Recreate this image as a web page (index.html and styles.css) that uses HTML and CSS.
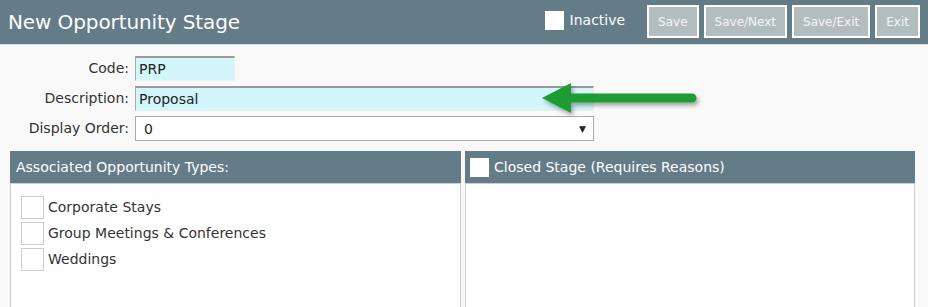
FILE: index.html
```html
<!DOCTYPE html>
<html lang="en">
<head>
  <meta charset="UTF-8" />
  <title>New Opportunity Stage</title>
  <link rel="stylesheet" href="styles.css">
</head>
<body>

<header class="topbar">
  <h1>New Opportunity Stage</h1>
  <div class="actions">
    <label class="inactive"><span class="box"></span>Inactive</label>
    <button class="btn">Save</button>
    <button class="btn">Save/Next</button>
    <button class="btn">Save/Exit</button>
    <button class="btn">Exit</button>
  </div>
</header>

<!-- Stage fields -->
<section class="form">
  <label class="lbl">Code:</label>
  <div class="field code">PRP</div>
  <label class="lbl">Description:</label>
  <div class="field desc">Proposal</div>
  <label class="lbl">Display Order:</label>
  <div class="select"><span>0</span><span class="caret">&#9660;</span></div>

  <svg class="arrow" width="170" height="40" viewBox="0 0 170 40">
    <defs>
      <filter id="shadow" x="-10%" y="-30%" width="130%" height="180%">
        <feDropShadow dx="2" dy="3" stdDeviation="2" flood-color="#000" flood-opacity="0.35"/>
      </filter>
    </defs>
    <g filter="url(#shadow)">
      <line x1="30" y1="17" x2="153" y2="17" stroke="#1b9c31" stroke-width="9" stroke-linecap="round"/>
      <polygon points="3,17 32,2 32,32" fill="#1b9c31"/>
    </g>
  </svg>
</section>

<!-- Panels -->
<section class="panels">
  <div class="panel">
    <div class="panel-head">Associated Opportunity Types:</div>
    <div class="panel-body">
      <label class="item"><span class="check"></span>Corporate Stays</label>
      <label class="item"><span class="check"></span>Group Meetings &amp; Conferences</label>
      <label class="item"><span class="check"></span>Weddings</label>
    </div>
  </div>
  <div class="panel">
    <div class="panel-head"><span class="box"></span>Closed Stage (Requires Reasons)</div>
    <div class="panel-body"></div>
  </div>
</section>

</body>
</html>
```

FILE: styles.css
```css
* {
  box-sizing: border-box;
}
body {
  margin: 0;
  font-family: "DejaVu Sans", Verdana, sans-serif;
  font-size: 14px;
  background: #f9f9f9;
  color: #333;
  overflow: hidden;
}
.topbar {
  height: 45px;
  background: #647b88;
  border-bottom: 1px solid #d4dbdf;
  display: flex;
  align-items: center;
  justify-content: space-between;
  padding: 0 8px 0 8px;
}
.topbar h1 {
  margin: 0;
  font-weight: normal;
  font-size: 20px;
  color: #fff;
  letter-spacing: -0.1px;
}
.actions {
  display: flex;
  align-items: center;
  gap: 5px;
}
.inactive {
  display: flex;
  align-items: center;
  color: #fff;
  font-size: 14px;
  margin-right: 17px;
  padding-bottom: 4px;
}
.box {
  display: inline-block;
  width: 19px;
  height: 19px;
  background: #fff;
  margin-right: 6px;
}
.btn {
  height: 33px;
  padding: 0 9px;
  margin: 0 0 1px 0;
  background: #b2bebd;
  border: 2px solid #fff;
  color: #f6f6f6;
  font-family: inherit;
  font-size: 12px;
}
.form {
  position: relative;
  display: grid;
  grid-template-columns: 129px auto;
  column-gap: 6px;
  row-gap: 5px;
  padding: 11px 0 0 0;
  width: 600px;
}
.lbl {
  text-align: right;
  line-height: 25px;
}
.field {
  height: 25px;
  line-height: 22px;
  padding: 0 3px;
  background: #d2f6f9;
  border-top: 2px solid #999;
  border-left: 1px solid #aaa;
  border-right: 1px solid #eee;
  border-bottom: 1px solid #eee;
  color: #222;
}
.code {
  width: 100px;
}
.desc {
  width: 459px;
}
.select {
  width: 459px;
  height: 25px;
  background: #fff;
  border: 1px solid #aaa;
  display: flex;
  justify-content: space-between;
  align-items: center;
  padding: 0 7px 0 8px;
  color: #222;
}
.caret {
  font-size: 9px;
}
.arrow {
  position: absolute;
  left: 539px;
  top: 36px;
}
.panels {
  display: grid;
  grid-template-columns: 451px 450px;
  gap: 4px;
  padding: 10px 0 0 10px;
}
.panel-head {
  height: 33px;
  background: #647b88;
  color: #fff;
  display: flex;
  align-items: center;
  padding: 0 6px;
  border-bottom: 1px solid #c9d1d5;
}
.panel-head .box {
  margin-left: -1px;
  margin-right: 5px;
}
.panel-body {
  background: #fff;
  border: 1px solid #ccc;
  border-top: none;
  height: 140px;
  padding: 10px 0 0 10px;
}
.item {
  display: flex;
  align-items: center;
  height: 26px;
  color: #333;
}
.check {
  width: 23px;
  height: 23px;
  border: 1px solid #ccc;
  background: #fff;
  margin-right: 4px;
}
```
